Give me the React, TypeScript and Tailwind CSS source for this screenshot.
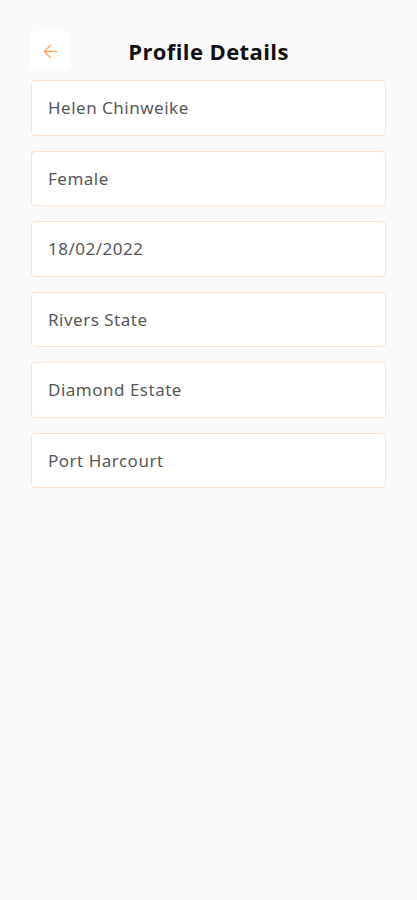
import { ArrowLeft } from "lucide-react"

const fields = [
  "Helen Chinweike",
  "Female",
  "18/02/2022",
  "Rivers State",
  "Diamond Estate",
  "Port Harcourt",
]

export default function App() {
  return (
    <div className="min-h-[900px] w-full bg-[#fafafa] px-[31px] pt-[31px] font-['Noto_Sans',sans-serif]">
      {/* Header */}
      <div className="relative flex h-[40px] items-center justify-center">
        <button className="absolute left-[-1px] top-0 flex h-[40px] w-[40px] items-center justify-center rounded-md bg-white">
          <ArrowLeft size={21} strokeWidth={1.6} className="text-[#f0a868]" />
        </button>
        <h1 className="font-['Open_Sans',sans-serif] text-[22px] font-bold tracking-[0.4px] text-[#111]">
          Profile Details
        </h1>
      </div>

      {/* Fields */}
      <div className="mt-[9px] flex flex-col gap-[15px]">
        {fields.map((value) => (
          <div
            key={value}
            className="flex h-[55.5px] items-center rounded-[4px] border border-[#fbe3cf] bg-white px-[16px] text-[17px] tracking-[0.5px] text-[#585858]"
          >
            {value}
          </div>
        ))}
      </div>
    </div>
  )
}
